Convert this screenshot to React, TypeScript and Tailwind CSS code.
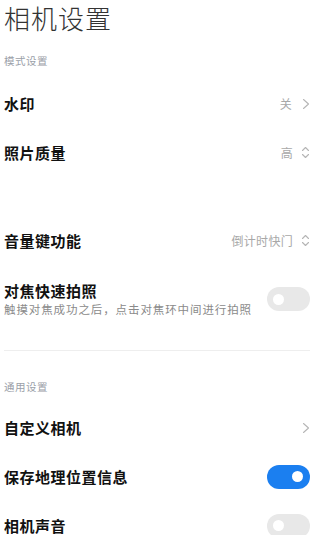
import type { ReactNode } from 'react';

const font = { fontFamily: '"Noto Sans CJK SC", "Noto Sans", sans-serif' };

function ChevronRight() {
  return (
    <svg width="8" height="12" viewBox="0 0 8 12" fill="none" className="ml-[10px]">
      <path d="M1.5 1.5L6.5 6L1.5 10.5" stroke="#b5b5b5" strokeWidth="1.1" strokeLinecap="round" strokeLinejoin="round" />
    </svg>
  );
}

function ChevronUpDown() {
  return (
    <svg width="9" height="13" viewBox="0 0 9 13" fill="none" className="ml-[8px]">
      <path d="M1.5 4.5L4.5 1.5L7.5 4.5" stroke="#b5b5b5" strokeWidth="1.1" strokeLinecap="round" strokeLinejoin="round" />
      <path d="M1.5 8.5L4.5 11.5L7.5 8.5" stroke="#b5b5b5" strokeWidth="1.1" strokeLinecap="round" strokeLinejoin="round" />
    </svg>
  );
}

function Toggle({ on }: { on?: boolean }) {
  return (
    <div
      className={
        on
          ? 'flex h-[24px] w-[43px] items-center justify-end rounded-full bg-[#1b7ff0] pr-[7px]'
          : 'flex h-[24px] w-[43px] items-center justify-start rounded-full bg-[#e8e8e8] pl-[6px]'
      }
    >
      <div className="size-[11px] rounded-full bg-white" />
    </div>
  );
}

function Header({ children, mt }: { children: ReactNode; mt: string }) {
  return (
    <div className={`flex h-[20px] items-center text-[10.5px] tracking-[0.5px] text-[#9aa0a8] ${mt}`}>
      {children}
    </div>
  );
}

function Row({ label, right, className = '' }: { label: string; right?: ReactNode; className?: string }) {
  return (
    <div className={`flex h-[49px] items-center justify-between ${className}`}>
      <span className="text-[15px] font-bold leading-[18px] tracking-[0.5px] text-[#111]">{label}</span>
      <div className="flex items-center">{right}</div>
    </div>
  );
}

function Value({ text }: { text: string }) {
  return <span className="text-[12px] tracking-[0.3px] text-[#a8a8a8]">{text}</span>;
}

export default function App() {
  return (
    <div className="h-[535px] w-[327px] overflow-hidden bg-white pl-[4px] pr-[17px]" style={font}>
      <div className="h-[36px] pt-[1px] text-[26px] font-light leading-[34px] tracking-[1px] text-[#333]">相机设置</div>

      <Header mt="mt-[15px]">模式设置</Header>
      <Row
        className="mt-[8px]"
        label="水印"
        right={
          <>
            <Value text="关" />
            <ChevronRight />
          </>
        }
      />
      <Row
        label="照片质量"
        right={
          <>
            <Value text="高" />
            <ChevronUpDown />
          </>
        }
      />
      <Row
        className="mt-[39px]"
        label="音量键功能"
        right={
          <>
            <Value text="倒计时快门" />
            <ChevronUpDown />
          </>
        }
      />

      <div className="flex items-center justify-between pt-[16px] pb-[16px]">
        <div className="flex flex-col">
          <span className="text-[15px] font-bold leading-[20px] tracking-[0.5px] text-[#111]">对焦快速拍照</span>
          <span className="text-[11.5px] leading-[16px] tracking-[0.9px] text-[#8a8a8a]">
            触摸对焦成功之后，点击对焦环中间进行拍照
          </span>
        </div>
        <Toggle />
      </div>

      <div className="mt-[17px] border-t border-[#eeeeee]" />

      <Header mt="mt-[26px]">通用设置</Header>
      <Row className="mt-[6px]" label="自定义相机" right={<ChevronRight />} />
      <Row label="保存地理位置信息" right={<Toggle on />} />
      <Row label="相机声音" right={<Toggle />} />
    </div>
  );
}
